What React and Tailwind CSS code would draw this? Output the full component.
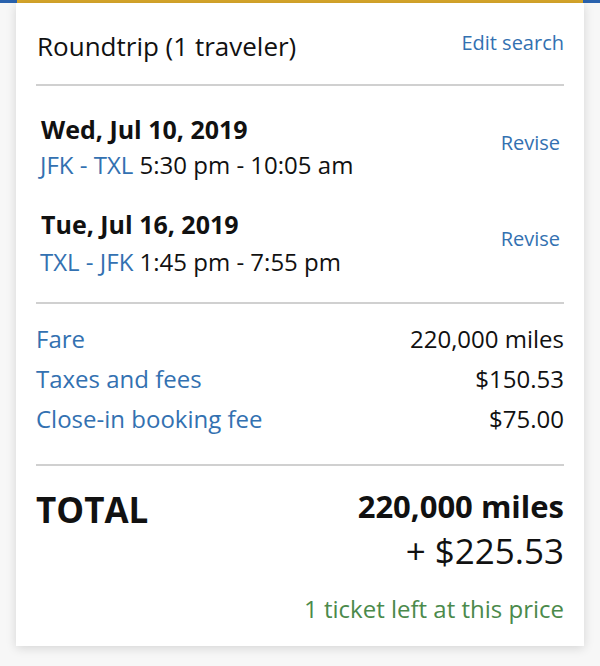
export default function App() {
  const font = { fontFamily: '"Open Sans", "Noto Sans", sans-serif' };
  return (
    <div className="w-[600px] h-[666px] bg-[#f7f7f7] overflow-hidden text-[#111]" style={font}>
      <div className="h-[3px] bg-[#2a62ad] px-[17px]">
        <div className="h-full bg-[#d8a72b]"></div>
      </div>
      <div className="mx-4 bg-white shadow-[0_2px_10px_rgba(0,0,0,0.14)] px-5 pb-[22px]">
        <div className="flex justify-between items-start pt-[29px]">
          <div className="text-[26px] leading-[28px] pl-[1px]">Roundtrip (1 traveler)</div>
          <div className="text-[20px] leading-[24px] text-[#3371b1] -mt-[1px]">Edit search</div>
        </div>
        <div className="mt-[24px] h-[2px] bg-[#d0d0d0]"></div>

        <div className="flex justify-between items-start pt-[27px]">
          <div className="pl-[5px]">
            <div className="text-[25px] leading-[32px] font-bold">Wed, Jul 10, 2019</div>
            <div className="text-[24px] leading-[40px] -ml-[1px]">
              <span className="text-[#3371b1]">JFK - TXL</span> 5:30 pm - 10:05 am
            </div>
          </div>
          <div className="text-[20px] leading-[24px] text-[#3371b1] mt-[18px] pr-[4px]">Revise</div>
        </div>

        <div className="flex justify-between items-start pt-[23px]">
          <div className="pl-[5px]">
            <div className="text-[25px] leading-[32px] font-bold">Tue, Jul 16, 2019</div>
            <div className="text-[24px] leading-[44px] -ml-[1px]">
              <span className="text-[#3371b1]">TXL - JFK</span> 1:45 pm - 7:55 pm
            </div>
          </div>
          <div className="text-[20px] leading-[24px] text-[#3371b1] mt-[19px] pr-[4px]">Revise</div>
        </div>

        <div className="mt-[18px] h-[2px] bg-[#d0d0d0]"></div>

        <div className="pt-[15px] text-[24px] leading-[40px]">
          <div className="flex justify-between">
            <span className="text-[#3371b1]">Fare</span>
            <span>220,000 miles</span>
          </div>
          <div className="flex justify-between">
            <span className="text-[#3371b1]">Taxes and fees</span>
            <span>$150.53</span>
          </div>
          <div className="flex justify-between">
            <span className="text-[#3371b1]">Close-in booking fee</span>
            <span>$75.00</span>
          </div>
        </div>

        <div className="mt-[25px] h-[2px] bg-[#d0d0d0]"></div>

        <div className="flex justify-between items-start pt-[20px]">
          <div className="text-[35px] leading-[44px] font-bold mt-[2px]">TOTAL</div>
          <div className="text-right">
            <div className="text-[31px] leading-[40px] font-bold">220,000 miles</div>
            <div className="text-[35px] leading-[50px]">+ $225.53</div>
            <div className="text-[24px] leading-[30px] text-[#4b8a4b] mt-[18px]">1 ticket left at this price</div>
          </div>
        </div>
      </div>
    </div>
  );
}
